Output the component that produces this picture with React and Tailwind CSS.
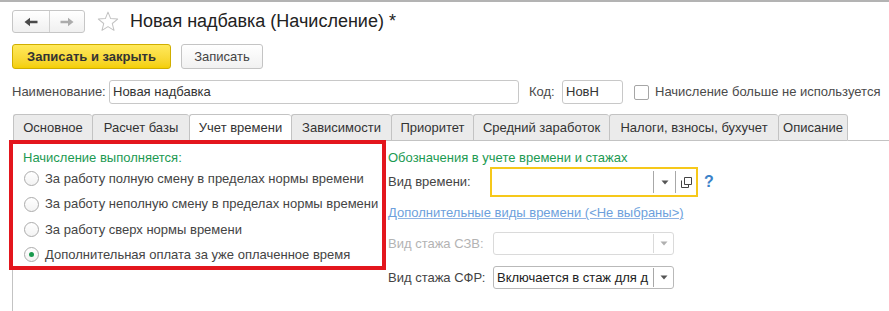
import React from "react";

const tabs = [
  { t: "Основное", w: "w-[79px]" },
  { t: "Расчет базы", w: "w-[97px]" },
  { t: "Учет времени", w: "w-[102px]", active: true },
  { t: "Зависимости", w: "w-[100px]" },
  { t: "Приоритет", w: "w-[82px]" },
  { t: "Средний заработок", w: "w-[136px]" },
  { t: "Налоги, взносы, бухучет", w: "w-[169px]" },
  { t: "Описание", w: "w-[70px]", last: true },
];

const radios = [
  "За работу полную смену в пределах нормы времени",
  "За работу неполную смену в пределах нормы времени",
  "За работу сверх нормы времени",
  "Дополнительная оплата за уже оплаченное время",
];

function Arrow({ color }) {
  return (
    <svg width="8" height="5" viewBox="0 0 8 5">
      <path d="M0.5 0.5 H7.5 L4 4.5 Z" fill={color} />
    </svg>
  );
}

export default function App() {
  return (
    <div className="w-[889px] h-[311px] overflow-hidden bg-white font-['Liberation_Sans',Arial,sans-serif] text-[13px] text-[#333]">
      <div className="h-[2px] bg-[#b3b3b3]" />

      {/* header */}
      <div className="flex items-center h-[23px] mt-[8px] pl-[12px]">
        <div className="flex h-[23px] w-[73px] rounded-[3px] border border-[#c6c6c6] bg-gradient-to-b from-white to-[#f0f0f0]">
          <div className="flex w-[37px] items-center justify-center border-r border-[#d0d0d0]">
            <svg width="14" height="10" viewBox="0 0 14 10">
              <path d="M0.5 5 L6 0.8 V3.8 H13.5 V6.2 H6 V9.2 Z" fill="#4a4a4a" />
            </svg>
          </div>
          <div className="flex flex-1 items-center justify-center">
            <svg width="14" height="10" viewBox="0 0 14 10">
              <path d="M13.5 5 L8 0.8 V3.8 H0.5 V6.2 H8 V9.2 Z" fill="#ababab" />
            </svg>
          </div>
        </div>
        <svg className="ml-[12px]" width="22" height="21" viewBox="0 0 24 23">
          <path
            d="M12 1.2 L14.9 8.3 L22.6 8.8 L16.7 13.7 L18.6 21.2 L12 17.1 L5.4 21.2 L7.3 13.7 L1.4 8.8 L9.1 8.3 Z"
            fill="none"
            stroke="#c2c2c2"
            strokeWidth="1.1"
            strokeLinejoin="round"
          />
        </svg>
        <div className="ml-[11px] text-[18px] leading-[23px] text-[#222]">
          Новая надбавка (Начисление) *
        </div>
      </div>

      {/* buttons */}
      <div className="flex mt-[11px] pl-[12px] gap-[10px]">
        <div className="flex h-[25px] w-[159px] items-center justify-center rounded-[3px] border border-[#d0ae00] bg-gradient-to-b from-[#ffe95a] to-[#f4cf00] font-bold text-[#333]">
          Записать и закрыть
        </div>
        <div className="flex h-[25px] w-[82px] items-center justify-center rounded-[3px] border border-[#c4c4c4] bg-gradient-to-b from-white to-[#f1f1f1] text-[#444]">
          Записать
        </div>
      </div>

      {/* name row */}
      <div className="flex items-center mt-[11px] h-[24px] pl-[12px]">
        <div className="w-[97px] text-[#4a4a4a]">Наименование:</div>
        <div className="flex h-[24px] w-[410px] items-center rounded-[3px] border border-[#c8c8c8] pl-[3px] text-[#333]">
          Новая надбавка
        </div>
        <div className="ml-[10px] w-[33px] text-[#4a4a4a]">Код:</div>
        <div className="flex h-[24px] w-[61px] items-center rounded-[3px] border border-[#c8c8c8] pl-[3px] text-[#333]">
          НовН
        </div>
        <div className="ml-[11px] h-[15px] w-[15px] rounded-[2px] border border-[#a6a6a6] bg-white" />
        <div className="ml-[6px] text-[#4a4a4a]">Начисление больше не используется</div>
      </div>

      {/* tabs */}
      <div className="flex mt-[10px] pl-[13px] h-[27px]">
        {tabs.map((tab) => (
          <div
            key={tab.t}
            className={`${tab.w} flex items-center justify-center rounded-t-[3px] border-t border-l ${
              tab.last ? "border-r" : ""
            } border-[#c3c3c3] ${
              tab.active ? "bg-white border-b border-b-white" : "bg-[#ebebeb] border-b"
            } text-[#333]`}
          >
            {tab.t}
          </div>
        ))}
        <div className="flex-1 border-b border-[#c3c3c3]" />
      </div>

      {/* content */}
      <div className="flex ml-[12px] h-[170px] border-l border-[#c3c3c3]">
        <div className="-ml-[4px] -mt-px h-[130px] w-[377px] border-[4px] border-[#e3161d]">
          <div className="pl-[10px] pt-[6px] leading-[16px] text-[#1c9a52]">Начисление выполняется:</div>
          {radios.map((r, i) => (
            <div key={r} className="flex h-[25.4px] items-center pl-[11px]">
              <div className="flex h-[15px] w-[15px] items-center justify-center rounded-full border border-[#ababab] bg-gradient-to-b from-white to-[#f3f3f3]">
                {i === 3 && <div className="h-[5px] w-[5px] rounded-full bg-[#199a4e]" />}
              </div>
              <div className="ml-[6px] text-[#444]">{r}</div>
            </div>
          ))}
        </div>

        <div className="ml-[2px] flex flex-col">
          <div className="pt-[9px] leading-[16px] text-[#1c9a52]">Обозначения в учете времени и стажах</div>
          <div className="mt-[1px] flex h-[30px] items-center">
            <div className="w-[102px] text-[#444]">Вид времени:</div>
            <div className="flex h-[30px] w-[208px] border-2 border-[#f6c81a] bg-white">
              <div className="w-[161px]" />
              <div className="my-[2px] flex w-[22px] items-center justify-center border-l border-[#a8a8a8]">
                <Arrow color="#555" />
              </div>
              <div className="my-[2px] flex w-[21px] items-center justify-center border-l border-[#a8a8a8]">
                <svg width="11" height="11" viewBox="0 0 11 11">
                  <path d="M3.5 0.5 H10.5 V7.5 H3.5 Z" fill="none" stroke="#444" strokeWidth="1" />
                  <path d="M0.5 3.5 V10.5 H7.5 V7.5" fill="none" stroke="#444" strokeWidth="1" />
                </svg>
              </div>
            </div>
            <div className="ml-[6px] text-[16px] font-bold text-[#3b82c8]">?</div>
          </div>
          <div className="flex h-[32px] items-center">
            <span className="text-[#6d9fdc] underline decoration-[#8fb4e4]">
              Дополнительные виды времени (&lt;Не выбраны&gt;)
            </span>
          </div>
          <div className="mt-[3px] flex h-[23px] items-center">
            <div className="w-[105px] text-[#b3b3b3]">Вид стажа СЗВ:</div>
            <div className="flex h-[23px] w-[181px] rounded-[3px] border border-[#dadada] bg-white">
              <div className="w-[159px]" />
              <div className="my-[1px] flex w-[20px] items-center justify-center border-l border-[#dadada]">
                <Arrow color="#b0b0b0" />
              </div>
            </div>
          </div>
          <div className="mt-[11px] flex h-[23px] items-center">
            <div className="w-[105px] text-[#444]">Вид стажа СФР:</div>
            <div className="flex h-[23px] w-[181px] rounded-[3px] border border-[#b9b9b9] bg-white">
              <div className="flex w-[159px] items-center whitespace-nowrap pl-[3px] text-[#222]">
                Включается в стаж для д
              </div>
              <div className="my-[1px] flex w-[20px] items-center justify-center border-l border-[#a8a8a8]">
                <Arrow color="#555" />
              </div>
            </div>
          </div>
        </div>
      </div>
    </div>
  );
}
